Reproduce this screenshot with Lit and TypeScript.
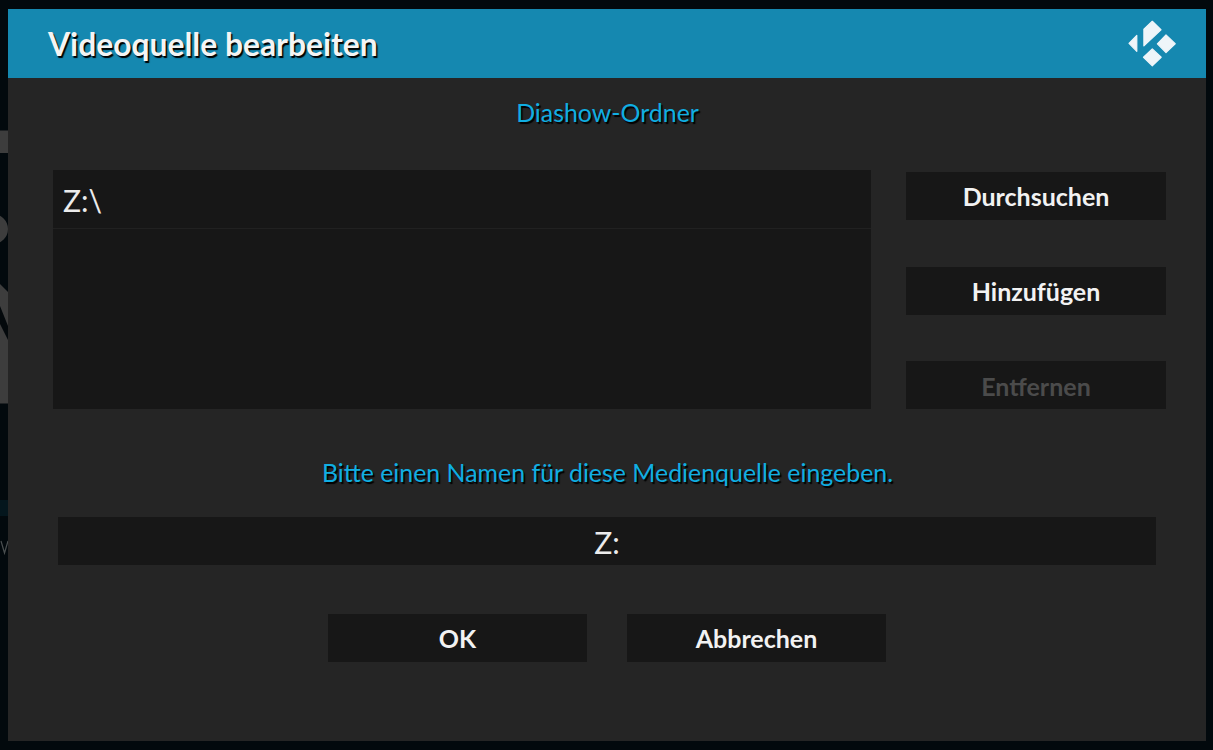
import { LitElement, html, css } from "lit";
import { customElement } from "lit/decorators.js";

@customElement("app-root")
export class AppRoot extends LitElement {
  static styles = css`
    :host {
      display: block;
      position: relative;
      width: 1213px;
      height: 750px;
      overflow: hidden;
      background: #02090d;
      font-family: "Lato", "Liberation Sans", sans-serif;
      color: #f2f2f2;
    }
    .backdrop { position: absolute; left: 0; top: 0; width: 1213px; height: 750px; }
    .dialog {
      position: absolute;
      left: 8px;
      top: 9px;
      width: 1198px;
      height: 732px;
      background: #252525;
      display: flex;
      flex-direction: column;
    }
    .header {
      height: 69px;
      flex: none;
      background: #1588b0;
      display: flex;
      align-items: center;
      justify-content: space-between;
      padding: 0 30px 0 40px;
    }
    .title {
      font-size: 31.8px;
      line-height: 40px;
      font-weight: 700;
      color: #f4f4f4;
      text-shadow: 1.5px 1.5px 1px #000;
    }
    .logo { width: 48px; height: 48px; display: block; }
    .body { padding: 20px 40px 0 45px; display: flex; flex-direction: column; }
    .caption {
      color: #10aee2;
      font-size: 24.9px;
      line-height: 28px;
      text-align: center;
      text-shadow: 1.5px 1.5px 1px #000;
    }
    .folder-caption { padding-right: 4px; }
    .sources { display: flex; gap: 35px; margin-top: 44px; }
    .list { width: 818px; height: 239px; background: #171717; flex: none; }
    .row {
      height: 58px;
      border-bottom: 1px solid #212121;
      padding-left: 10px;
      font-size: 30px;
      line-height: 60px;
      color: #ececec;
    }
    .side { display: flex; flex-direction: column; padding-top: 2px; gap: 46.5px; }
    .btn {
      width: 260px;
      height: 48px;
      background: #171717;
      color: #f2f2f2;
      font-size: 25px;
      font-weight: 700;
      line-height: 48px;
      text-align: center;
    }
    .btn.off { color: #4b4b4b; line-height: 50px; }
    .name-caption { margin-top: 49px; padding-right: 4px; }
    .input {
      margin: 31px 10px 0 5px;
      height: 48px;
      background: #171717;
      font-size: 30px;
      line-height: 50px;
      text-align: center;
      color: #ececec;
    }
    .actions { display: flex; justify-content: center; gap: 40px; margin-top: 49px; padding-right: 5px; }
    .actions .btn { width: 259px; }
  `;

  render() {
    return html`
      <svg class="backdrop" viewBox="0 0 1213 750" aria-hidden="true">
        <rect x="0" y="130.5" width="8" height="22.5" fill="#3d3d3d"></rect>
        <circle cx="-7" cy="229" r="15" fill="#3d3d3d"></circle>
        <path d="M0 284 L8 292 V403.5 H0 Z" fill="#3d3d3d"></path>
        <path d="M0 306 L8 326 V340 L0 324 Z" fill="#04090c"></path>
        <rect x="0" y="500" width="8" height="16" fill="#04161d"></rect>
        <path d="M1 541 L4.5 553 L8 541" fill="none" stroke="#4a4f50" stroke-width="1.2"></path>
      </svg>
      <div class="dialog">
        <div class="header">
          <div class="title">Videoquelle bearbeiten</div>
          <svg class="logo" viewBox="1128 19.5 48 48" aria-hidden="true">
            <g fill="#eef5f9" stroke="#eef5f9" stroke-width="1.2" stroke-linejoin="round">
              <path d="M1129 42.8 L1136.8 35 V50.8 Z"></path>
              <path d="M1143.9 28.6 L1152.3 20.8 L1161 29.3 L1143.9 45.4 Z"></path>
              <path d="M1166 34.4 L1175.2 43.3 L1166 52 L1157.4 43.3 Z"></path>
              <path d="M1152.3 48.4 L1161.2 56.7 L1152.3 65.3 L1143.5 56.7 Z"></path>
            </g>
          </svg>
        </div>
        <div class="body">
          <div class="caption folder-caption">Diashow-Ordner</div>
          <div class="sources">
            <div class="list"><div class="row">Z:\\</div></div>
            <div class="side">
              <div class="btn">Durchsuchen</div>
              <div class="btn">Hinzufügen</div>
              <div class="btn off">Entfernen</div>
            </div>
          </div>
          <div class="caption name-caption">Bitte einen Namen für diese Medienquelle eingeben.</div>
          <div class="input">Z:</div>
          <div class="actions">
            <div class="btn">OK</div>
            <div class="btn">Abbrechen</div>
          </div>
        </div>
      </div>
    `;
  }
}
